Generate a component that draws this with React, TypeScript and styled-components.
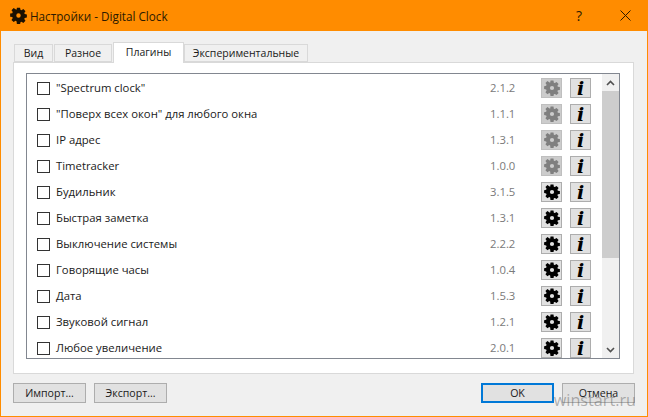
import React from "react";
import styled, { createGlobalStyle } from "styled-components";

const Global = createGlobalStyle`
  html, body { margin: 0; padding: 0; background: #f0f0f0; }
  * { box-sizing: border-box; }
`;

const Win = styled.div`
  position: relative;
  width: 648px;
  height: 417px;
  border: 1px solid #ff8c00;
  border-top: 0;
  background: #f0f0f0;
  display: flex;
  flex-direction: column;
  font-family: "Open Sans", "Noto Sans", sans-serif;
  font-size: 11.3px;
  color: #1a1a1a;
  overflow: hidden;
`;

const TitleBar = styled.div`
  height: 31px;
  flex: none;
  margin: 0 -1px;
  background: #ff8c00;
  display: flex;
  align-items: center;
  padding-left: 10px;
  color: #2b1a00;
  font-size: 11.7px;
`;

const TitleText = styled.span`
  margin-left: 3px;
  flex: 1;
`;

const TitleBtn = styled.div`
  width: 46px;
  height: 31px;
  display: flex;
  align-items: center;
  justify-content: center;
  font-size: 14px;
`;

const Body = styled.div`
  flex: 1;
  display: flex;
  flex-direction: column;
  padding: 11px 12px 13px 12px;
`;

const Tabs = styled.div`
  display: flex;
  height: 20px;
  align-items: flex-end;
  padding-left: 1px;
  position: relative;
  z-index: 1;
`;

const Tab = styled.div<{ $w: number; $active?: boolean }>`
  width: ${(p) => p.$w}px;
  height: ${(p) => (p.$active ? 21 : 18)}px;
  margin-bottom: ${(p) => (p.$active ? -1 : 0)}px;
  margin-right: ${(p) => (p.$active ? 0 : 1)}px;
  background: ${(p) => (p.$active ? "#ffffff" : "#f0f0f0")};
  border: 1px solid #d9d9d9;
  border-bottom: ${(p) => (p.$active ? "0" : "1px solid #d9d9d9")};
  display: flex;
  align-items: center;
  justify-content: center;
  font-size: 10.5px;
  padding-bottom: ${(p) => (p.$active ? 3 : 0)}px;
`;

const Pane = styled.div`
  height: 312px;
  width: 621px;
  background: #fff;
  border: 1px solid #d9d9d9;
  padding: 10px 13px 14px 12px;
`;

const List = styled.div`
  height: 100%;
  border: 1px solid #828790;
  background: #fff;
  display: flex;
  overflow: hidden;
`;

const Rows = styled.div`
  flex: 1;
  padding-top: 1px;
  overflow: hidden;
`;

const Row = styled.div`
  height: 26px;
  display: flex;
  align-items: center;
  padding-left: 10px;
`;

const Check = styled.div`
  width: 13px;
  height: 13px;
  border: 1px solid #333;
  background: #fff;
  flex: none;
`;

const Label = styled.span`
  margin-left: 6px;
  flex: 1;
  white-space: nowrap;
  padding-bottom: 2px;
`;

const Version = styled.span`
  width: 51px;
  color: #7a7a7a;
  padding-bottom: 2px;
`;

const IconBtn = styled.div<{ $off?: boolean }>`
  width: 21px;
  height: 20px;
  margin-right: 8px;
  background: ${(p) => (p.$off ? "#cccccc" : "#e1e1e1")};
  border: 1px solid ${(p) => (p.$off ? "#bfbfbf" : "#adadad")};
  display: flex;
  align-items: center;
  justify-content: center;
  flex: none;
  overflow: hidden;
`;

const InfoGlyph = styled.span`
  font-family: "DejaVu Serif", "Liberation Serif", serif;
  font-style: italic;
  font-weight: 700;
  font-size: 19px;
  line-height: 18px;
  color: #000;
`;

const Scroll = styled.div`
  width: 17px;
  margin-left: 3px;
  background: #f0f0f0;
  display: flex;
  flex-direction: column;
  flex: none;
`;

const ScrollEnd = styled.div`
  height: 17px;
  display: flex;
  align-items: center;
  justify-content: center;
  flex: none;
`;

const Thumb = styled.div`
  height: 167px;
  background: #cdcdcd;
  flex: none;
`;

const Spacer = styled.div`
  flex: 1;
`;

const Footer = styled.div`
  display: flex;
  gap: 8px;
  margin-top: 9px;
`;

const Btn = styled.div<{ $primary?: boolean }>`
  width: 73px;
  height: 20px;
  background: #e1e1e1;
  border: ${(p) => (p.$primary ? "2px solid #0078d7" : "1px solid #adadad")};
  display: flex;
  align-items: center;
  justify-content: center;
  font-size: 10.6px;
  padding-bottom: 1px;
`;

const Watermark = styled.div`
  position: absolute;
  right: 11px;
  bottom: 7px;
  font-size: 16.2px;
  line-height: 18px;
  color: rgba(90, 90, 90, 0.45);
`;

const gearPath =
  "M9.6 0h4.8l.6 3.3 1.6.7 2.8-1.9 3.3 3.3-1.9 2.8.7 1.6 3.3.6v4.8l-3.3.6-.7 1.6 1.9 2.8-3.3 3.3-2.8-1.9-1.6.7-.6 3.3H9.6L9 20.9l-1.6-.7-2.8 1.9-3.3-3.3 1.9-2.8-.7-1.6-3.3-.6V9l3.3-.6.7-1.6-1.9-2.8 3.3-3.3 2.8 1.9L9 3.3zM12 8.6a3.4 3.4 0 1 0 0 6.8 3.4 3.4 0 0 0 0-6.8z";

const Gear = ({ size, color }: { size: number; color: string }) => (
  <svg width={size} height={size} viewBox="-1 -1 26 26">
    <path d={gearPath} fill={color} fillRule="evenodd" />
  </svg>
);

const plugins: [string, string, boolean][] = [
  ['"Spectrum clock"', "2.1.2", true],
  ['"Поверх всех окон" для любого окна', "1.1.1", true],
  ["IP адрес", "1.3.1", true],
  ["Timetracker", "1.0.0", true],
  ["Будильник", "3.1.5", false],
  ["Быстрая заметка", "1.3.1", false],
  ["Выключение системы", "2.2.2", false],
  ["Говорящие часы", "1.0.4", false],
  ["Дата", "1.5.3", false],
  ["Звуковой сигнал", "1.2.1", false],
  ["Любое увеличение", "2.0.1", false],
];

export default function App() {
  return (
    <Win>
      <Global />
      <TitleBar>
        <Gear size={17} color="#1a1000" />
        <TitleText>Настройки - Digital Clock</TitleText>
        <TitleBtn>?</TitleBtn>
        <TitleBtn>
          <svg width="11" height="11" viewBox="0 0 11 11">
            <path d="M.5.5l10 10M10.5.5l-10 10" stroke="#2b1a00" strokeWidth="1" fill="none" />
          </svg>
        </TitleBtn>
      </TitleBar>
      <Body>
        <Tabs>
          <Tab $w={39}>Вид</Tab>
          <Tab $w={58}>Разное</Tab>
          <Tab $w={71} $active>Плагины</Tab>
          <Tab $w={124}>Экспериментальные</Tab>
        </Tabs>
        <Pane>
          <List>
            <Rows>
              {plugins.map(([name, ver, off]) => (
                <Row key={name}>
                  <Check />
                  <Label>{name}</Label>
                  <Version>{ver}</Version>
                  <IconBtn $off={off}>
                    <Gear size={16} color={off ? "#7f7f7f" : "#000"} />
                  </IconBtn>
                  <IconBtn>
                    <InfoGlyph>i</InfoGlyph>
                  </IconBtn>
                </Row>
              ))}
            </Rows>
            <Scroll>
              <ScrollEnd>
                <svg width="9" height="6" viewBox="0 0 9 6">
                  <path d="M1 5l3.5-3.5L8 5" stroke="#505050" strokeWidth="1.6" fill="none" />
                </svg>
              </ScrollEnd>
              <Thumb />
              <Spacer />
              <ScrollEnd>
                <svg width="9" height="6" viewBox="0 0 9 6">
                  <path d="M1 1l3.5 3.5L8 1" stroke="#505050" strokeWidth="1.6" fill="none" />
                </svg>
              </ScrollEnd>
            </Scroll>
          </List>
        </Pane>
        <Footer>
          <Btn>Импорт...</Btn>
          <Btn>Экспорт...</Btn>
          <Spacer />
          <Btn $primary>OK</Btn>
          <Btn>Отмена</Btn>
        </Footer>
      </Body>
      <Watermark>winstart.ru</Watermark>
    </Win>
  );
}
